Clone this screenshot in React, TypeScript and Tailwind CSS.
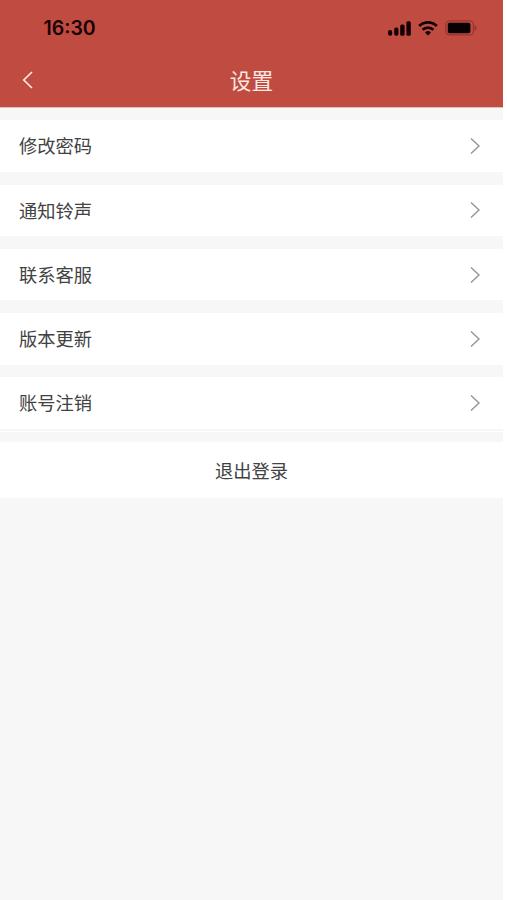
const menuItems = [
  { id: 'password', label: '修改密码' },
  { id: 'ringtone', label: '通知铃声' },
  { id: 'support', label: '联系客服' },
  { id: 'update', label: '版本更新' },
  { id: 'deactivate', label: '账号注销' },
];

const SignalIcon = () => (
  <svg width="23" height="15" viewBox="0 0 23 15" fill="currentColor">
    <rect x="0" y="9" width="4.2" height="5.8" rx="2" />
    <rect x="6.2" y="6.6" width="4.2" height="8.2" rx="1.8" />
    <rect x="12.2" y="3.4" width="4.4" height="11.4" rx="1.6" />
    <rect x="18.4" y="0.2" width="4.4" height="14.6" rx="1.6" />
  </svg>
);

const WifiIcon = () => (
  <svg width="20" height="15" viewBox="0 0 20 15" fill="none" stroke="currentColor">
    <path d="M1.2 5a12.5 12.5 0 0 1 17.6 0" strokeWidth="2.9" />
    <path d="M4.6 8.8a7.7 7.7 0 0 1 10.8 0" strokeWidth="2.6" />
    <path d="M10 14.4l-3-3a4.3 4.3 0 0 1 6 0z" fill="currentColor" stroke="none" />
  </svg>
);

const BatteryIcon = () => (
  <svg width="33" height="16" viewBox="0 0 33 16">
    <rect x="0.9" y="0.9" width="27.6" height="14" rx="4" fill="none" stroke="#98342e" strokeWidth="1.2" />
    <rect x="2.8" y="2.7" width="22.6" height="10.6" rx="1.8" fill="#080001" />
    <path d="M29.4 5.3c2.9 1 2.9 4.2 0 5.2z" fill="#98342e" />
  </svg>
);

const StatusBar = () => (
  <div className="flex h-14 items-center justify-between pl-[43.5px] pr-[25px] text-[#180204]">
    <span className="pt-[2px] font-['Inter','Liberation_Sans',sans-serif] text-[19.5px] font-semibold leading-none">
      16:30
    </span>
    <div className="flex items-center text-[#120103]">
      <SignalIcon />
      <span className="ml-[7.5px]">
        <WifiIcon />
      </span>
      <span className="ml-[7px]">
        <BatteryIcon />
      </span>
    </div>
  </div>
);

const NavBar = () => (
  <div className="grid h-[51px] grid-cols-[1fr_auto_1fr] items-center pb-1 text-[#ffe9e2]">
    <button type="button" aria-label="返回" className="ml-[21.5px] w-3">
      <svg width="12" height="20" viewBox="0 0 12 20" fill="none" stroke="currentColor" strokeWidth="1.7">
        <path d="M10 2L1.8 10L10 18" />
      </svg>
    </button>
    <h1 className="text-[21.7px] leading-none">设置</h1>
  </div>
);

const MenuRow = ({ label }: { label: string }) => (
  <button
    type="button"
    className="flex h-[51.5px] w-full items-center justify-between bg-white pl-[19px] pr-[22.5px] last-of-type:shadow-[0_2px_0_#f7f7f7,0_3px_0_#ffffff]"
  >
    <span className="pb-px">{label}</span>
    <svg width="12" height="18" viewBox="0 0 12 18" fill="none" stroke="#949494" strokeWidth="1.4">
      <path d="M2 1.6L10 9L2 16.4" />
    </svg>
  </button>
);

export default function App() {
  return (
    <div className="h-[900px] w-full bg-white font-['Noto_Sans_CJK_SC',sans-serif] text-[18.3px] leading-none text-[#424242]">
      <div className="h-full w-[503px] bg-[#f7f7f7]">
        <header className="bg-[#c04b40] shadow-[0_0.5px_0_#cf8a84]">
          <StatusBar />
          <NavBar />
        </header>

        <main className="flex flex-col gap-[12.75px] pt-[13.25px]">
          <div className="flex flex-col gap-[12.75px]">
            {menuItems.map((item) => (
              <MenuRow key={item.id} label={item.label} />
            ))}
          </div>
          <button type="button" className="h-[56.5px] w-full bg-white pt-px">
            退出登录
          </button>
        </main>
      </div>
    </div>
  );
}
